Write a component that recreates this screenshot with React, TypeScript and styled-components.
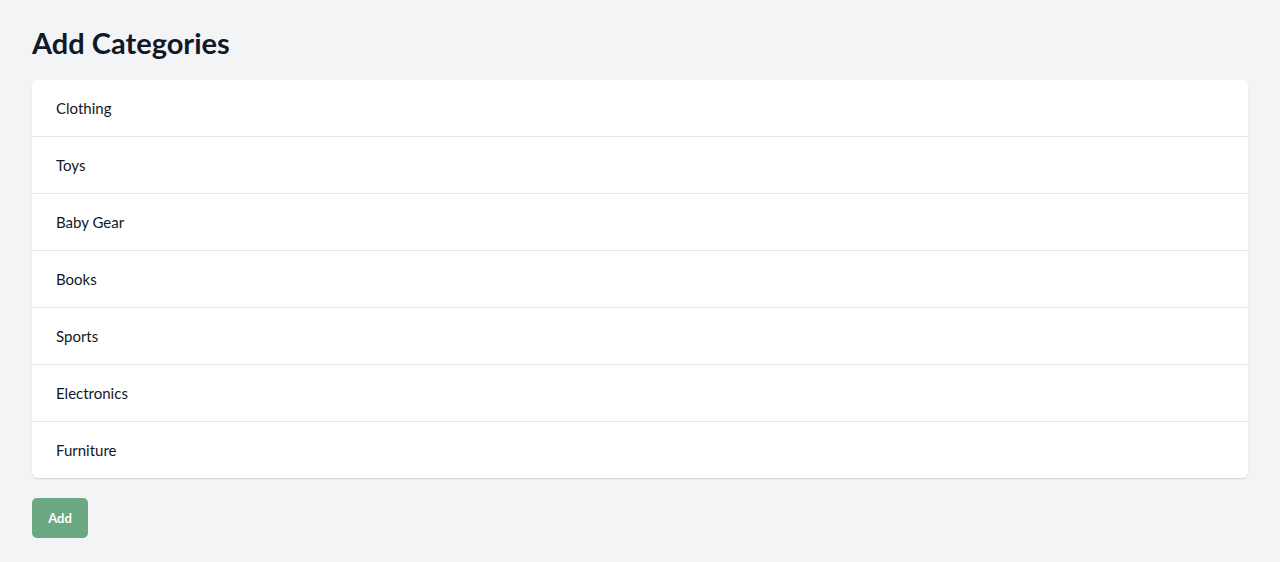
import * as React from 'react';
import styled, { createGlobalStyle } from 'styled-components';

const GlobalStyle = createGlobalStyle`
    html, body {
        margin: 0;
        padding: 0;
        background-color: #f3f4f6;
        font-family: 'Source Sans Pro', Lato, 'Liberation Sans', sans-serif;
    }
`;

const Page = styled.div`
    padding: 24px 32px;
    display: flex;
    flex-direction: column;
    align-items: flex-start;
`;

const Title = styled.h1`
    margin: 0 0 18px;
    font-size: 29px;
    line-height: 38px;
    font-weight: 700;
    color: #111827;
`;

const Card = styled.ul`
    list-style: none;
    margin: 0;
    padding: 0;
    width: 100%;
    background-color: #ffffff;
    border-radius: 6px;
    box-shadow: 0 1px 2px rgba(0, 0, 0, 0.1), 0 1px 1px rgba(0, 0, 0, 0.04);
    overflow: hidden;
`;

const Row = styled.li`
    display: flex;
    align-items: center;
    height: 56px;
    padding: 0 24px;
    font-size: 15px;
    color: #111827;
    & + & {
        border-top: 1px solid #e5e7eb;
    }
`;

const AddButton = styled.button`
    margin-top: 20px;
    width: 56px;
    height: 40px;
    border: none;
    border-radius: 5px;
    background-color: #6aa882;
    color: #ffffff;
    font-family: inherit;
    font-size: 13px;
    font-weight: 700;
    cursor: pointer;
`;

const categories = ['Clothing', 'Toys', 'Baby Gear', 'Books', 'Sports', 'Electronics', 'Furniture'];

export default function App() {
    return (
        <>
            <GlobalStyle />
            <Page>
                <Title>Add Categories</Title>
                <Card>
                    {categories.map((name) => (
                        <Row key={name}>{name}</Row>
                    ))}
                </Card>
                <AddButton>Add</AddButton>
            </Page>
        </>
    );
}
